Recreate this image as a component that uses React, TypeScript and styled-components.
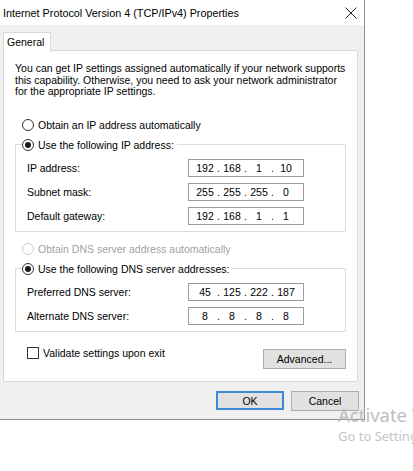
import React from 'react';
import styled, { createGlobalStyle } from 'styled-components';

const GlobalStyle = createGlobalStyle`
  html, body {
    margin: 0;
    padding: 0;
    background: #fff;
    overflow: hidden;
  }

  body {
    font-family: "Liberation Sans", Arial, sans-serif;
    font-size: 10.5px;
    color: #000;
  }
`;

const Page = styled.div`
  position: relative;
  width: 413px;
  height: 471px;
  overflow: hidden;
`;

const Window = styled.div`
  width: 364px;
  background: #f0f0f0;
  border-right: 1px solid #8e8e8e;
  border-bottom: 1px solid #8e8e8e;
`;

const TitleBar = styled.div`
  height: 25px;
  background: #fff;
  display: flex;
  align-items: center;
  justify-content: space-between;
  padding: 0 7px 0 3px;
  font-size: 10.8px;
`;

const Body = styled.div`
  padding: 7px 6px 8px 3px;
`;

const TabStrip = styled.div`
  display: flex;
  height: 18px;
`;

const Tab = styled.div`
  position: relative;
  z-index: 1;
  width: 43px;
  height: 19px;
  padding-left: 3px;
  background: #fff;
  border: 1px solid #d9d9d9;
  border-bottom: none;
  line-height: 18px;
`;

const Panel = styled.div`
  box-sizing: border-box;
  height: 332px;
  padding: 12px 11px 0 11px;
  background: #fff;
  border: 1px solid #d9d9d9;
`;

const Intro = styled.p`
  margin: 0;
  line-height: 11.5px;
`;

const Option = styled.label<{ $disabled?: boolean; $top?: number }>`
  display: flex;
  align-items: center;
  gap: 4px;
  height: 14px;
  margin-top: ${({ $top }) => $top ?? 0}px;
  padding-left: 7px;
  color: ${({ $disabled }) => ($disabled ? '#a2a2a2' : '#000')};
`;

const RadioDot = styled.span<{ $checked?: boolean; $disabled?: boolean }>`
  box-sizing: border-box;
  display: flex;
  align-items: center;
  justify-content: center;
  width: 12px;
  height: 12px;
  border-radius: 50%;
  border: 1px solid ${({ $disabled }) => ($disabled ? '#cfcfcf' : '#333')};
  background: #fff;

  &::after {
    content: '';
    display: ${({ $checked }) => ($checked ? 'block' : 'none')};
    width: 6px;
    height: 6px;
    border-radius: 50%;
    background: #1a1a1a;
  }
`;

const Group = styled.fieldset<{ $top: number }>`
  margin: ${({ $top }) => $top}px 0 0 0;
  padding: 0 0 6px 6px;
  border: 1px solid #dcdcdc;
  min-inline-size: 0;
`;

const GroupLegend = styled.legend`
  padding: 0 3px 0 0;

  ${Option} {
    padding-left: 0;
  }
`;

const Rows = styled.div`
  display: grid;
  grid-template-columns: 161px 116px;
  row-gap: 6px;
  padding: 7px 0 0 5px;
  align-items: center;
`;

const IpBox = styled.div`
  box-sizing: border-box;
  display: flex;
  align-items: center;
  height: 18px;
  padding-left: 5px;
  border: 1px solid #9b9b9b;
  background: #fff;
`;

const Octet = styled.span`
  width: 22px;
  text-align: center;
`;

const Dot = styled.span`
  width: 5px;
  text-align: center;
`;

const Footer = styled.div`
  display: flex;
  justify-content: space-between;
  align-items: flex-start;
  margin-top: 14px;
`;

const CheckOption = styled.label`
  display: flex;
  align-items: center;
  gap: 4px;
  height: 14px;
  padding-left: 12px;
`;

const CheckBox = styled.span`
  box-sizing: border-box;
  width: 12px;
  height: 12px;
  border: 1px solid #333;
  background: #fff;
`;

const Button = styled.button<{ $default?: boolean; $width: number }>`
  box-sizing: border-box;
  width: ${({ $width }) => $width}px;
  height: ${({ $default }) => ($default ? 19 : 20)}px;
  padding: 0;
  font: inherit;
  color: #000;
  background: #e1e1e1;
  border: ${({ $default }) => ($default ? '2px solid #3d8ad8' : '1px solid #adadad')};
`;

const AdvancedButton = styled(Button)`
  margin-top: 3px;
`;

const ButtonRow = styled.div`
  display: flex;
  justify-content: flex-end;
  gap: 7px;
  margin-top: 9px;
  margin-right: -1px;
`;

const Watermark = styled.div`
  position: absolute;
  left: 338px;
  top: 403px;
  white-space: nowrap;
  color: #bdbdbd;
  font-family: "Noto Sans", "Open Sans", sans-serif;
`;

const WatermarkTitle = styled.div`
  font-size: 18.5px;
  line-height: 24px;
`;

const WatermarkHint = styled.div`
  font-size: 13px;
  line-height: 18px;
  color: #c4c4c4;
`;

function Radio({ label, checked, disabled, top }: { label: string; checked?: boolean; disabled?: boolean; top?: number }) {
  return (
    <Option $disabled={disabled} $top={top}>
      <RadioDot $checked={checked} $disabled={disabled} />
      {label}
    </Option>
  );
}

function IpField({ value }: { value: string }) {
  const parts = value.split('.');
  return (
    <IpBox>
      {parts.map((p, i) => (
        <React.Fragment key={i}>
          {i > 0 && <Dot>.</Dot>}
          <Octet>{p}</Octet>
        </React.Fragment>
      ))}
    </IpBox>
  );
}

function CloseIcon() {
  return (
    <svg width="12" height="12" viewBox="0 0 12 12">
      <path d="M0.5 0.5 L11.5 11.5 M11.5 0.5 L0.5 11.5" stroke="#222" strokeWidth="1" fill="none" />
    </svg>
  );
}

export default function App() {
  return (
    <Page>
      <GlobalStyle />
      <Window>
        <TitleBar>
          <span>Internet Protocol Version 4 (TCP/IPv4) Properties</span>
          <CloseIcon />
        </TitleBar>
        <Body>
          <TabStrip>
            <Tab>General</Tab>
          </TabStrip>
          <Panel>
            <Intro>
              You can get IP settings assigned automatically if your network supports
              this capability. Otherwise, you need to ask your network administrator
              for the appropriate IP settings.
            </Intro>

            <Radio label="Obtain an IP address automatically" top={20} />
            <Group $top={6}>
              <GroupLegend>
                <Radio label="Use the following IP address:" checked />
              </GroupLegend>
              <Rows>
                <span>IP address:</span>
                <IpField value="192.168.1.10" />
                <span>Subnet mask:</span>
                <IpField value="255.255.255.0" />
                <span>Default gateway:</span>
                <IpField value="192.168.1.1" />
              </Rows>
            </Group>

            <Radio label="Obtain DNS server address automatically" disabled top={10} />
            <Group $top={6}>
              <GroupLegend>
                <Radio label="Use the following DNS server addresses:" checked />
              </GroupLegend>
              <Rows>
                <span>Preferred DNS server:</span>
                <IpField value="45.125.222.187" />
                <span>Alternate DNS server:</span>
                <IpField value="8.8.8.8" />
              </Rows>
            </Group>

            <Footer>
              <CheckOption>
                <CheckBox />
                Validate settings upon exit
              </CheckOption>
              <AdvancedButton $width={83}>Advanced...</AdvancedButton>
            </Footer>
          </Panel>
          <ButtonRow>
            <Button $default $width={68}>OK</Button>
            <Button $width={68}>Cancel</Button>
          </ButtonRow>
        </Body>
      </Window>
      <Watermark>
        <WatermarkTitle>Activate Windows</WatermarkTitle>
        <WatermarkHint>Go to Settings to activate Windows.</WatermarkHint>
      </Watermark>
    </Page>
  );
}
